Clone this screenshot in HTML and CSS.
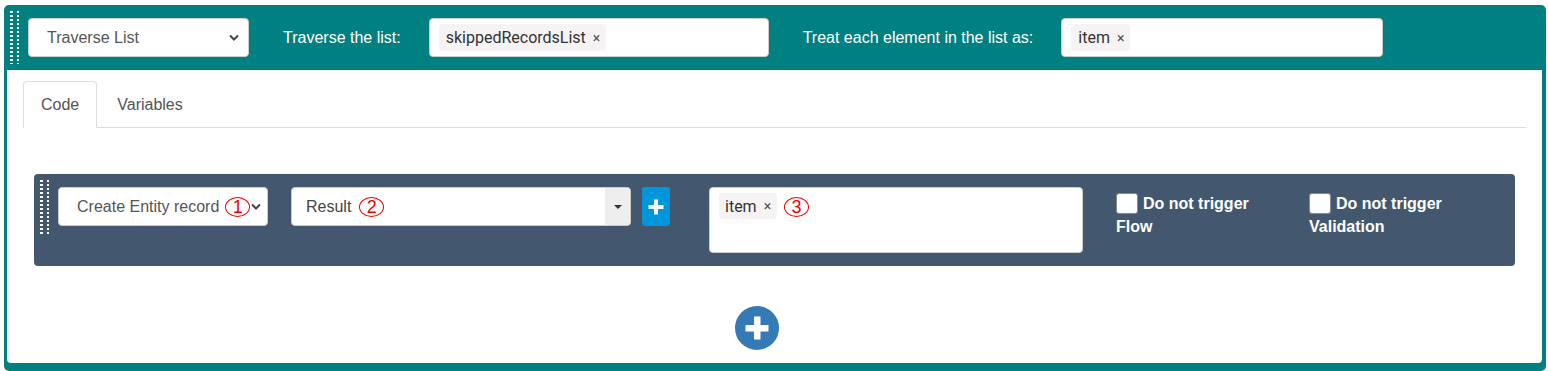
FILE: index.html
```html
<!DOCTYPE html>
<html lang="en">
<head>
<meta charset="utf-8">
<title>Traverse List</title>
<link rel="stylesheet" href="styles.css">
</head>
<body>
<div class="block">
  <div class="topbar">
    <div class="handle"></div>
    <div class="select sel-traverse">
      <span>Traverse List</span>
      <svg class="chev" width="10" height="7" viewBox="0 0 10 7"><polyline points="1,1.5 5,5.5 9,1.5" fill="none" stroke="#444" stroke-width="2"/></svg>
    </div>
    <span class="lbl lbl1">Traverse the list:</span>
    <div class="tagbox tb1"><span class="tag">skippedRecordsList<span class="x">×</span></span></div>
    <span class="lbl lbl2">Treat each element in the list as:</span>
    <div class="tagbox tb2"><span class="tag">item<span class="x">×</span></span></div>
  </div>
  <div class="panel">
    <div class="tabs">
      <div class="tab active">Code</div>
      <div class="tab">Variables</div>
    </div>
    <div class="tab-content">
      <div class="row">
        <div class="handle handle-row"></div>
        <div class="select sel-action">
          <span class="sel-text">Create Entity record<span class="num n1">1</span></span>
          <svg class="chev" width="10" height="7" viewBox="0 0 10 7"><polyline points="1,1.5 5,5.5 9,1.5" fill="none" stroke="#444" stroke-width="2"/></svg>
        </div>
        <div class="combo">
          <span class="combo-text">Result<span class="num n2">2</span></span>
          <span class="caret-box"><svg width="8" height="4" viewBox="0 0 8 4"><polygon points="0,0 8,0 4,4" fill="#333"/></svg></span>
        </div>
        <div class="btn-add"><svg width="16" height="16" viewBox="0 0 16 16"><rect x="0.5" y="6" width="15" height="4" fill="#fff"/><rect x="6" y="0.5" width="4" height="15" fill="#fff"/></svg></div>
        <div class="tagbox tb3"><span class="tag">item<span class="x">×</span></span><span class="num n3">3</span></div>
        <label class="chk chk1"><span class="box"></span>Do not trigger Flow</label>
        <label class="chk chk2"><span class="box"></span>Do not trigger Validation</label>
      </div>
      <div class="add-wrap">
        <span class="add-circle"><svg width="44" height="44" viewBox="0 0 44 44"><rect x="10.5" y="19" width="23" height="6.5" fill="#fff"/><rect x="19" y="10.5" width="6.5" height="23" fill="#fff"/></svg></span>
      </div>
    </div>
  </div>
</div>
</body>
</html>
```
FILE: styles.css
```css
* { box-sizing: border-box; }

body {
  margin: 0;
  font-family: "Liberation Sans", Arial, sans-serif;
  font-size: 16px;
  background: #fff;
  color: #555;
}

.block {
  margin: 5px 2px 0 4px;
  height: 366px;
  background: #008080;
  border-radius: 5px;
  padding: 0 4px 8px 3px;
  display: flex;
  flex-direction: column;
}

.topbar {
  height: 65px;
  flex: none;
  display: flex;
  align-items: center;
  padding-left: 3px;
}

.handle {
  width: 9px;
  height: 53px;
  flex: none;
  background-image: linear-gradient(#fff 2px, transparent 2px), linear-gradient(#fff 2px, transparent 2px);
  background-size: 2.5px 4px, 2.5px 4px;
  background-position: 0 0, 6.5px 0;
  background-repeat: repeat-y;
}

.select {
  height: 39px;
  background: #fff;
  border: 1px solid #ccc;
  border-radius: 4px;
  display: flex;
  align-items: center;
  justify-content: space-between;
  color: #555;
  flex: none;
}

.sel-traverse {
  width: 221px;
  margin-left: 9px;
  padding: 0 9px 0 18px;
}

.lbl {
  color: #fff;
  white-space: nowrap;
}

.lbl1 { margin-left: 34px; }
.lbl2 { margin-left: 34px; }

.tagbox {
  background: #fff;
  border: 1px solid #ccc;
  border-radius: 4px;
  display: flex;
  align-items: flex-start;
  flex: none;
  padding: 5px 9px;
}

.tb1 { width: 340px; height: 39px; margin-left: 28px; }
.tb2 { width: 322px; height: 39px; margin-left: 28px; }

.tag {
  display: inline-flex;
  align-items: center;
  height: 27px;
  padding: 0 6px 0 7px;
  background: #f5f3f3;
  border-radius: 4px;
  font-family: Roboto, "Liberation Sans", sans-serif;
  font-size: 16px;
  color: #333;
}

.x {
  font-size: 14px;
  color: #555;
  margin-left: 7px;
}

.panel {
  flex: 1;
  background: #fff;
  border-radius: 0 0 4px 4px;
  padding: 11px 16px 0;
}

.tabs {
  display: flex;
  border-bottom: 1px solid #ddd;
}

.tab {
  padding: 11px 17px;
  line-height: 23px;
  border: 1px solid transparent;
  border-radius: 4px 4px 0 0;
  margin-right: 2px;
  margin-bottom: -1px;
  color: #555;
}

.tab.active {
  border-color: #ddd #ddd transparent;
  background: #fff;
}

.tab-content {
  padding: 46px 11px 0;
}

.row {
  height: 92px;
  background: #43586e;
  border-radius: 4px;
  display: flex;
  align-items: flex-start;
  padding: 13px 0 0 6px;
}

.handle-row {
  height: 54px;
  margin-top: -7px;
}

.sel-action {
  width: 210px;
  margin-left: 9px;
  padding: 0 6px 0 18px;
}

.sel-text, .combo-text {
  display: flex;
  align-items: center;
  white-space: nowrap;
}

.num {
  display: inline-flex;
  align-items: center;
  justify-content: center;
  width: 25px;
  height: 20px;
  border: 1.5px solid #e00;
  border-radius: 50%;
  color: #e00;
  font-size: 18px;
  line-height: 1;
  flex: none;
}

.n1 { margin-left: 6px; }
.n2 { margin-left: 8px; }
.n3 { margin-left: 7px; margin-top: 4px; }

.combo {
  width: 340px;
  height: 39px;
  margin-left: 23px;
  background: #fff;
  border: 1px solid #ccc;
  border-radius: 4px;
  display: flex;
  align-items: center;
  padding-left: 14px;
  color: #444;
  flex: none;
}

.caret-box {
  margin-left: auto;
  align-self: stretch;
  width: 25px;
  background: #eee;
  border-radius: 0 3px 3px 0;
  display: flex;
  align-items: center;
  justify-content: center;
}

.btn-add {
  width: 28px;
  height: 39px;
  margin-left: 11px;
  background: #0096dc;
  border-radius: 3px;
  display: flex;
  align-items: center;
  justify-content: center;
  flex: none;
}

.tb3 {
  width: 374px;
  height: 66px;
  margin-left: 39px;
}

.tb3 .tag { height: 26px; padding: 0 6px 0 6px; }

.chk {
  width: 160px;
  margin-top: 5px;
  color: #fff;
  font-weight: bold;
  line-height: 23px;
  flex: none;
}

.chk1 { margin-left: 33px; }
.chk2 { margin-left: 33px; }

.box {
  display: inline-block;
  width: 22px;
  height: 21px;
  background: #fff;
  border: 1px solid #888;
  border-radius: 3px;
  vertical-align: -5px;
  margin-right: 5px;
}

.add-wrap {
  display: flex;
  justify-content: center;
  padding-right: 35px;
  margin-top: 40px;
}

.add-circle {
  width: 44px;
  height: 44px;
  border-radius: 50%;
  background: #337ab7;
  display: block;
}

.add-circle svg { display: block; }
```
